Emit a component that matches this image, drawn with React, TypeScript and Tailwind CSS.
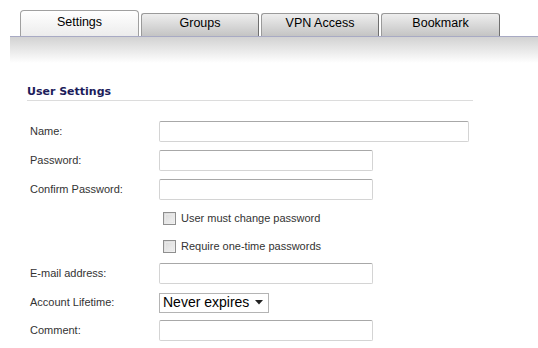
import { ReactNode } from "react";

const tabs = [
  { name: "Settings", w: "w-[119px]", active: true },
  { name: "Groups", w: "w-[118px]", active: false },
  { name: "VPN Access", w: "w-[118px]", active: false },
  { name: "Bookmark", w: "w-[119px]", active: false },
];

function Row(props: { label?: string; h: string; children: ReactNode }) {
  return (
    <div className={`flex items-center ${props.h}`}>
      <div className="w-[129px] text-[11px] text-[#333]">{props.label}</div>
      {props.children}
    </div>
  );
}

function TextBox(props: { wide?: boolean }) {
  return (
    <div
      className={`h-[21px] rounded-[2px] border border-[#d4d4d4] border-t-[#a8a8a8] bg-white ${
        props.wide ? "w-[310px]" : "w-[214px]"
      }`}
    />
  );
}

function Check(props: { label: string }) {
  return (
    <div className="ml-[4px] flex items-center gap-[5px]">
      <div className="h-[13px] w-[13px] border border-[#8f8f8f] bg-gradient-to-br from-[#d8d8d8] to-[#f4f4f4] p-[1px]">
        <div className="h-full w-full border border-[#e8e8e8]" />
      </div>
      <span className="text-[11px] text-[#333]">{props.label}</span>
    </div>
  );
}

export default function App() {
  return (
    <div className="h-[348px] w-[538px] overflow-hidden bg-white font-['Liberation_Sans',Arial,sans-serif]">
      <div className="flex h-[36px] items-end gap-[2px] pl-[20px]">
        {tabs.map((t) =>
          t.active ? (
            <div
              key={t.name}
              className={`${t.w} flex h-[26px] items-center justify-center rounded-t-[4px] border border-b-0 border-[#a0a0a0] bg-gradient-to-b from-white to-[#ececec] pb-[2px] text-[12.5px] text-black`}
            >
              {t.name}
            </div>
          ) : (
            <div
              key={t.name}
              className={`${t.w} flex h-[23px] items-center justify-center rounded-t-[3px] border border-b-0 border-[#9a9a9a] border-r-[#6f6f6f] bg-gradient-to-b from-[#eeeeee] to-[#c4c4c4] pb-[4px] text-[12.5px] text-black`}
            >
              {t.name}
            </div>
          )
        )}
      </div>
      <div className="ml-[10px] h-[1px] bg-[#a8aac4]" />
      <div className="ml-[10px] h-[26px] bg-gradient-to-b from-[#d2d2d2] to-white" />

      <div className="pl-[27px] pt-[22px]">
        <div className="font-['DejaVu_Sans',Verdana,sans-serif] text-[11px] font-bold leading-[14px] text-[#1c1c5a]">
          User Settings
        </div>
        <div className="mt-[1px] h-[1px] w-[446px] bg-[#dcdcdc]" />
      </div>

      <div className="pl-[30px] pt-[16px]">
        <Row label="Name:" h="h-[29px]">
          <TextBox wide />
        </Row>
        <Row label="Password:" h="h-[29px]">
          <TextBox />
        </Row>
        <Row label="Confirm Password:" h="h-[29px]">
          <TextBox />
        </Row>
        <Row h="h-[29px]">
          <Check label="User must change password" />
        </Row>
        <Row h="h-[26px]">
          <Check label="Require one-time passwords" />
        </Row>
        <Row label="E-mail address:" h="h-[29px]">
          <TextBox />
        </Row>
        <Row label="Account Lifetime:" h="h-[29px]">
          <div className="flex h-[20px] w-[110px] items-center justify-between border border-[#b4b4b4] bg-white pl-[3px] pr-[5px] text-[14px] text-black">
            <span>Never expires</span>
            <svg width="8" height="5" viewBox="0 0 8 5">
              <path d="M0 0h8L4 4.5z" fill="#222" />
            </svg>
          </div>
        </Row>
        <Row label="Comment:" h="h-[27px]">
          <TextBox />
        </Row>
      </div>
    </div>
  );
}
